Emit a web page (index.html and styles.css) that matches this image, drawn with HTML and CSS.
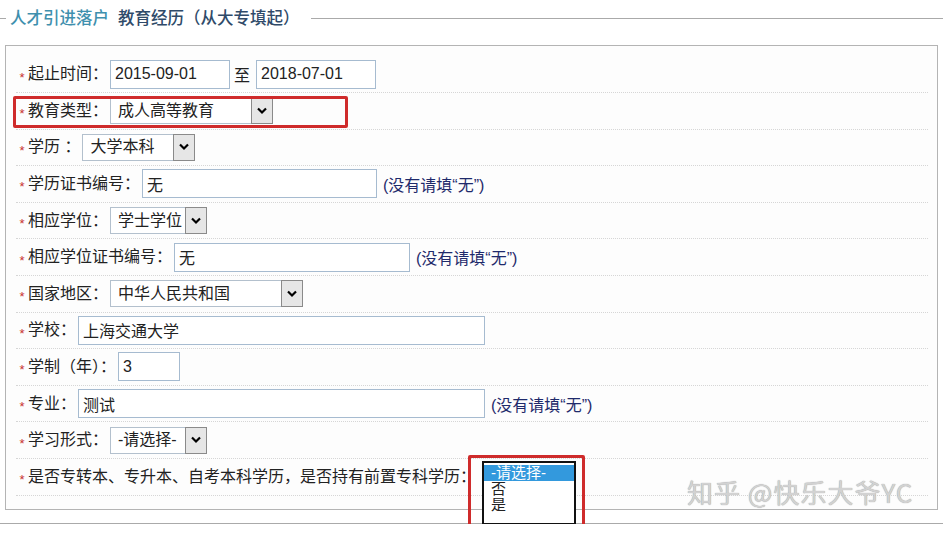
FILE: index.html
```html
<!DOCTYPE html>
<html>
<head>
    <title>教育经历</title>
    <link rel="stylesheet" href="styles.css">
</head>
<body>
    <div class="legend">
        <span class="rule short"></span>
        <h2 class="title"><span class="title-a">人才引进落户</span>教育经历（从大专填起）</h2>
        <span class="rule"></span>
    </div>

    <div class="box">
        <div class="row">
            <i class="req">*</i><span class="label">起止时间：</span>
            <input type="text" class="field w120" value="2015-09-01">
            <span class="to">至</span>
            <input type="text" class="field w120" value="2018-07-01">
        </div>
        <div class="row">
            <i class="req">*</i><span class="label">教育类型：</span>
            <div class="select w163"><span class="value">成人高等教育</span><span class="arrow"><svg width="12" height="8" viewBox="0 0 12 8"><path d="M2 1.5 L6 5.5 L10 1.5" fill="none" stroke="#000" stroke-width="2.2"/></svg></span></div>
        </div>
        <div class="row">
            <i class="req">*</i><span class="label">学历 ：</span>
            <div class="select w113"><span class="value">大学本科</span><span class="arrow"><svg width="12" height="8" viewBox="0 0 12 8"><path d="M2 1.5 L6 5.5 L10 1.5" fill="none" stroke="#000" stroke-width="2.2"/></svg></span></div>
        </div>
        <div class="row">
            <i class="req">*</i><span class="label">学历证书编号：</span>
            <input type="text" class="field w235" value="无">
            <span class="hint">(没有请填“无”)</span>
        </div>
        <div class="row">
            <i class="req">*</i><span class="label">相应学位：</span>
            <div class="select w97"><span class="value">学士学位</span><span class="arrow"><svg width="12" height="8" viewBox="0 0 12 8"><path d="M2 1.5 L6 5.5 L10 1.5" fill="none" stroke="#000" stroke-width="2.2"/></svg></span></div>
        </div>
        <div class="row">
            <i class="req">*</i><span class="label">相应学位证书编号：</span>
            <input type="text" class="field w236" value="无">
            <span class="hint">(没有请填“无”)</span>
        </div>
        <div class="row">
            <i class="req">*</i><span class="label">国家地区：</span>
            <div class="select w193"><span class="value">中华人民共和国</span><span class="arrow"><svg width="12" height="8" viewBox="0 0 12 8"><path d="M2 1.5 L6 5.5 L10 1.5" fill="none" stroke="#000" stroke-width="2.2"/></svg></span></div>
        </div>
        <div class="row">
            <i class="req">*</i><span class="label">学校：</span>
            <input type="text" class="field w407" value="上海交通大学">
        </div>
        <div class="row">
            <i class="req">*</i><span class="label">学制（年）：</span>
            <input type="text" class="field w62" value="3">
        </div>
        <div class="row">
            <i class="req">*</i><span class="label">专业：</span>
            <input type="text" class="field w407" value="测试">
            <span class="hint">(没有请填“无”)</span>
        </div>
        <div class="row">
            <i class="req">*</i><span class="label">学习形式：</span>
            <div class="select w97"><span class="value">-请选择-</span><span class="arrow"><svg width="12" height="8" viewBox="0 0 12 8"><path d="M2 1.5 L6 5.5 L10 1.5" fill="none" stroke="#000" stroke-width="2.2"/></svg></span></div>
        </div>
        <div class="row">
            <i class="req">*</i><span class="label">是否专转本、专升本、自考本科学历，是否持有前置专科学历：</span>
            <div class="listbox">
                <div class="option selected">-请选择-</div>
                <div class="option">否</div>
                <div class="option">是</div>
            </div>
        </div>

        <!-- annotation marks -->
        <div class="mark mark-type"></div>
        <div class="mark mark-list"></div>
        <div class="watermark">知乎 @快乐大爷YC</div>
    </div>

    <div class="bottom-line"></div>
</body>
</html>
```

FILE: styles.css
```css
body {
    margin: 0;
    background: #fff;
    font-family: "Liberation Sans", "Noto Sans CJK SC", sans-serif;
    font-size: 16px;
    color: #222;
}
.legend {
    display: flex;
    align-items: center;
    height: 36px;
}
.rule {
    flex: 1;
    border-top: 1px solid #aaa;
}
.rule.short {
    flex: none;
    width: 6px;
}
.title {
    margin: 0 11px 0 4px;
    font-size: 16.5px;
    font-weight: 500;
    line-height: 20px;
    color: #2f4a69;
}
.title-a {
    color: #3f90ae;
    margin-right: 9px;
}
.box {
    position: relative;
    margin: 9px 5px 0 5px;
    padding: 10.4px 9px 13.4px 10px;
    border: 1px solid #b4b4b4;
    background: #fdfdfd;
}
.row {
    display: flex;
    align-items: center;
    height: 35.6px;
    border-bottom: 1px dotted #d6d6d6;
}
.req {
    width: 12px;
    padding-top: 6px;
    font-style: normal;
    font-size: 13px;
    color: #c83232;
    text-align: center;
}
.label {
    margin-right: 2px;
    line-height: 20px;
    white-space: nowrap;
}
.field {
    box-sizing: border-box;
    height: 29px;
    padding: 0 4px;
    border: 1px solid #a6bbd0;
    background: #fff;
    font-family: "Liberation Sans", "Noto Sans CJK SC", sans-serif;
    font-size: 16px;
    color: #222;
    outline: none;
}
.w120 { width: 120px; }
.w235 { width: 235px; }
.w236 { width: 236px; }
.w407 { width: 407px; }
.w62 { width: 62px; }
.to {
    margin: 0 6px 0 4px;
}
.hint {
    margin-left: 6px;
    color: #1f2a6b;
}
.select {
    box-sizing: border-box;
    display: flex;
    align-items: center;
    height: 27px;
    padding-left: 7px;
    border: 1px solid #b3c0cd;
    background: #fff;
}
.w163 { width: 163px; }
.w113 { width: 113px; }
.w97 { width: 97px; }
.w193 { width: 193px; }
.select .value {
    white-space: nowrap;
    line-height: 20px;
}
.select .arrow {
    box-sizing: border-box;
    display: flex;
    align-items: center;
    justify-content: center;
    width: 22px;
    height: 27px;
    margin: 0 -1px 0 auto;
    border: 1px solid #8a8a8a;
    background: #e6e6e6;
}
.listbox {
    box-sizing: border-box;
    align-self: flex-start;
    width: 94px;
    height: 64px;
    margin: 2.4px 0 0 4px;
    padding-top: 2px;
    border: 2px solid #111;
    background: #fff;
    overflow: hidden;
}
.option {
    height: 16px;
    padding-left: 7px;
    line-height: 16px;
    font-size: 15px;
    overflow: hidden;
}
.option.selected {
    background: #3399dd;
    color: #fff;
}
.mark {
    position: absolute;
    box-sizing: border-box;
    border: 3px solid #cf2b2b;
    border-radius: 2px;
}
.mark-type {
    left: 7px;
    top: 50px;
    width: 335px;
    height: 32px;
}
.mark-list {
    left: 462px;
    top: 409px;
    width: 117px;
    height: 74px;
}
.watermark {
    position: absolute;
    left: 681px;
    top: 433px;
    font-family: "Noto Sans CJK SC", sans-serif;
    font-size: 26px;
    line-height: 26px;
    letter-spacing: 1px;
    color: #d2d2d2;
    text-shadow: 0 0 1px #8f8f8f;
    white-space: nowrap;
}
.bottom-line {
    margin-top: 13px;
    border-top: 1px solid #aaa;
}
```
